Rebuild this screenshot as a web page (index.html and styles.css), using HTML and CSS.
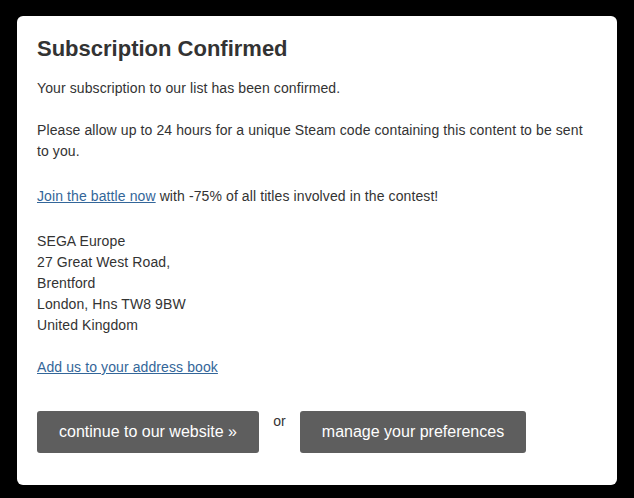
FILE: index.html
```html
<!DOCTYPE html>
<html>
<head>
<meta charset="utf-8">
<link rel="stylesheet" href="styles.css">
</head>
<body>
<div class="card">
  <h1 class="title">Subscription Confirmed</h1>
  <p class="p1">Your subscription to our list has been confirmed.</p>
  <p class="p2">Please allow up to 24 hours for a unique Steam code containing this content to be sent to you.</p>
  <p class="p3"><a href="#" class="link">Join the battle now</a> with -75% of all titles involved in the contest!</p>
  <p class="p4">SEGA Europe<br>27 Great West Road,<br>Brentford<br>London, Hns TW8 9BW<br>United Kingdom</p>
  <p class="p5"><a href="#" class="link">Add us to your address book</a></p>
  <div class="actions">
    <a href="#" class="btn btn-1">continue to our website »</a>
    <span class="or">or</span>
    <a href="#" class="btn btn-2">manage your preferences</a>
  </div>
</div>
</body>
</html>
```
FILE: styles.css
```css
html, body {
  margin: 0;
  padding: 0;
  background: #000;
}
body {
  padding: 16px 17px;
  font-family: "Liberation Sans", Arial, sans-serif;
  color: #333;
}
.card {
  width: 560px;
  height: 429px;
  background: #fff;
  border-radius: 6px;
  padding: 20px;
  box-sizing: content-box;
}
.title {
  font-size: 22px;
  font-weight: bold;
  margin: 0;
  line-height: 26px;
  color: #333;
}
p {
  font-size: 14px;
  line-height: 21px;
  margin: 0;
  letter-spacing: 0.1px;
}
.p1 { margin-top: 16px; }
.p2 { margin-top: 21px; }
.p3 { margin-top: 24px; }
.p4 { margin-top: 24px; }
.p5 { margin-top: 21px; }
.link {
  color: #336699;
  text-decoration: underline;
}
.actions {
  display: flex;
  align-items: flex-start;
  margin-top: 33px;
}
.btn {
  display: block;
  background: #5e5e5e;
  color: #fff;
  text-decoration: none;
  font-size: 16px;
  height: 42px;
  line-height: 42px;
  border-radius: 3px;
  text-align: center;
}
.btn-1 { width: 222px; }
.btn-2 { width: 226px; }
.or {
  font-size: 14px;
  width: 41px;
  text-align: center;
  line-height: 18px;
  margin-top: 1px;
}
```
